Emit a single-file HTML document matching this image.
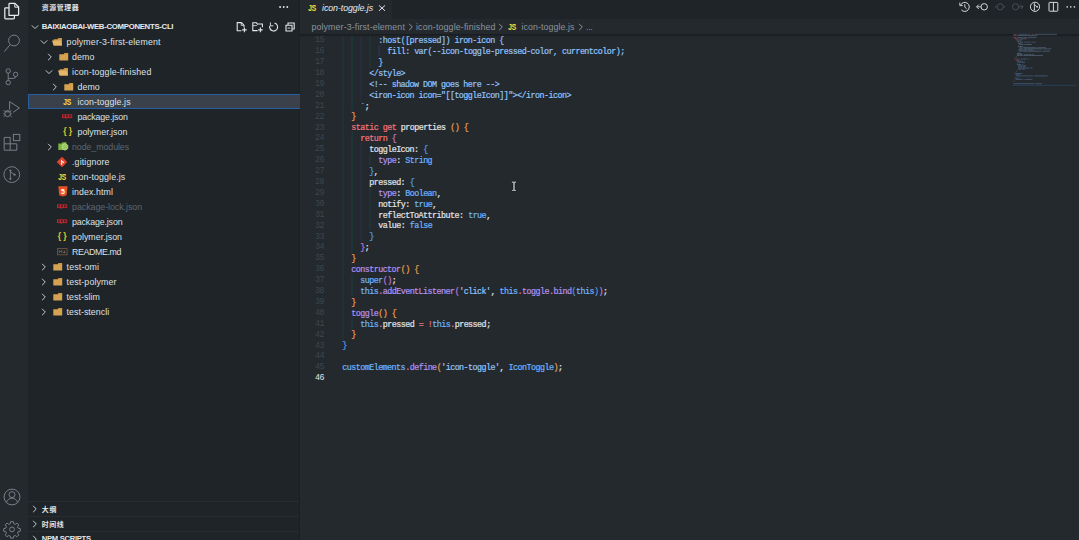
<!DOCTYPE html>
<html lang="zh-CN"><head><meta charset="utf-8"><title>icon-toggle.js</title><style>
html,body{margin:0;padding:0}
body{width:1079px;height:540px;overflow:hidden;position:relative;background:#24292e;font-family:"Liberation Sans","Noto Sans CJK SC",sans-serif;-webkit-font-smoothing:antialiased}
.abar{position:absolute;left:0;top:0;width:28px;height:540px;background:#24292e}
.side{position:absolute;left:28px;top:0;width:272px;height:540px;background:#1f2428}
.sideborder{position:absolute;left:298.8px;top:0;width:1.2px;height:540px;background:#1c2024}
.sel{position:absolute;left:28px;width:272px;height:15.3px;background:#3a414b;box-sizing:border-box;border:1px solid #255ea3;border-right:0;border-bottom-width:1.3px}
.t{position:absolute;white-space:nowrap;line-height:14px;height:14px}
.i{position:absolute;overflow:visible}
.paneline{position:absolute;left:28px;width:271px;height:1px;background:#272c31}
.tabbar{position:absolute;left:300px;top:0;width:779px;height:18.5px;background:#1f2428}
.tab{position:absolute;left:300px;top:0;width:91.6px;height:18.5px;background:#24292e}
.shadow{position:absolute;left:300px;top:33.6px;width:779px;height:3.4px;background:linear-gradient(rgba(22,25,29,0.9),rgba(27,31,35,0));z-index:5}
.g{position:absolute;width:1.5px;margin-left:-0.25px}
.code{font-family:"Liberation Mono",monospace;font-size:8.40px;font-weight:normal;-webkit-text-stroke:0.2px;letter-spacing:-0.546px}
.c,.ln{position:absolute;white-space:pre;line-height:10.90px;height:10.90px}
.ln{left:300px;width:23.9px;text-align:right;font-weight:normal;-webkit-text-stroke:0}
</style></head><body>
<div class="abar"></div>
<div class="side"></div>
<div class="sideborder"></div>
<div class="sel" style="top:94px"></div>
<span class="t" style="left:41.80px;top:0.80px;font-size:6.90px;color:#e1e4e8;font-weight:bold;letter-spacing:0.589px">资源管理器</span>
<span class="t" style="left:41.80px;top:20.00px;font-size:7.80px;color:#e6e9ed;font-weight:bold;letter-spacing:-0.308px">BAIXIAOBAI-WEB-COMPONENTS-CLI</span>
<svg class="i" style="left:30.40px;top:23.20px" width="10" height="8" viewBox="0 0 10 8"><path d="M1.8 2.4 L5 5.6 L8.2 2.4" fill="none" stroke="#c5cad0" stroke-width="1"/></svg>
<svg class="i" style="left:39.00px;top:37.50px" width="10" height="8" viewBox="0 0 10 8"><path d="M1.8 2.4 L5 5.6 L8.2 2.4" fill="none" stroke="#c5cad0" stroke-width="1"/></svg>
<svg class="i" style="left:52.10px;top:36.70px" width="11" height="9" viewBox="0 0 11 9"><path d="M1.6 2.2 H5.4 L6.4 0.9 H9.4 Q10 0.9 10 1.5 V8 Q10 8.5 9.5 8.5 H1.6 Z" fill="#c99748"/><path d="M0 3.6 H8.6 L10 8.5 H1.6 Z" fill="#e3b56b"/></svg>
<span class="t" style="left:66.60px;top:35.20px;font-size:8.84px;color:#dde1e6;letter-spacing:0.141px">polymer-3-first-element</span>
<svg class="i" style="left:45.64px;top:51.50px" width="8" height="10" viewBox="0 0 8 10"><path d="M2.1 1.8 L5.3 5 L2.1 8.2" fill="none" stroke="#c5cad0" stroke-width="1"/></svg>
<svg class="i" style="left:58.54px;top:51.70px" width="10" height="9" viewBox="0 0 10 9"><path d="M0.3 2.2 H4.6 L5.6 0.9 H8.6 Q9.2 0.9 9.2 1.5 V8 Q9.2 8.5 8.7 8.5 H0.8 Q0.3 8.5 0.3 8 Z" fill="#d4a251"/><path d="M5.2 1.9 H9.2" stroke="#b98636" stroke-width="0.6"/></svg>
<span class="t" style="left:72.04px;top:50.20px;font-size:8.84px;color:#dde1e6;letter-spacing:0.077px">demo</span>
<svg class="i" style="left:44.44px;top:67.50px" width="10" height="8" viewBox="0 0 10 8"><path d="M1.8 2.4 L5 5.6 L8.2 2.4" fill="none" stroke="#c5cad0" stroke-width="1"/></svg>
<svg class="i" style="left:57.54px;top:66.70px" width="11" height="9" viewBox="0 0 11 9"><path d="M1.6 2.2 H5.4 L6.4 0.9 H9.4 Q10 0.9 10 1.5 V8 Q10 8.5 9.5 8.5 H1.6 Z" fill="#c99748"/><path d="M0 3.6 H8.6 L10 8.5 H1.6 Z" fill="#e3b56b"/></svg>
<span class="t" style="left:72.04px;top:65.20px;font-size:8.84px;color:#dde1e6;letter-spacing:0.142px">icon-toggle-finished</span>
<svg class="i" style="left:51.08px;top:81.50px" width="8" height="10" viewBox="0 0 8 10"><path d="M2.1 1.8 L5.3 5 L2.1 8.2" fill="none" stroke="#c5cad0" stroke-width="1"/></svg>
<svg class="i" style="left:63.98px;top:81.70px" width="10" height="9" viewBox="0 0 10 9"><path d="M0.3 2.2 H4.6 L5.6 0.9 H8.6 Q9.2 0.9 9.2 1.5 V8 Q9.2 8.5 8.7 8.5 H0.8 Q0.3 8.5 0.3 8 Z" fill="#d4a251"/><path d="M5.2 1.9 H9.2" stroke="#b98636" stroke-width="0.6"/></svg>
<span class="t" style="left:77.48px;top:80.20px;font-size:8.84px;color:#dde1e6;letter-spacing:0.077px">demo</span>
<svg class="i" style="left:63.08px;top:97.00px" width="9" height="9" viewBox="0 0 9 9"><text x="0.2" y="7.7" font-size="9.3" font-weight="bold" fill="#f4d93e" stroke="#f4d93e" stroke-width="0.12" textLength="8.1" lengthAdjust="spacingAndGlyphs" font-family="Liberation Sans, sans-serif">JS</text></svg>
<span class="t" style="left:77.48px;top:95.20px;font-size:8.84px;color:#dde1e6;letter-spacing:0.083px">icon-toggle.js</span>
<svg class="i" style="left:62.48px;top:113.50px" width="11" height="6" viewBox="0 0 11 6"><rect x="0" y="0.4" width="10.2" height="3.7" fill="#bd2a30"/><path d="M3.4 4.1 H5.2 L4.3 4.9 Z" fill="#bd2a30"/><rect x="1" y="1.3" width="1.9" height="1.9" fill="#3a1c20"/><rect x="4" y="1.3" width="1.9" height="1.9" fill="#3a1c20"/><rect x="7" y="1.3" width="2.3" height="1.9" fill="#3a1c20"/><rect x="1.7" y="2" width="0.6" height="1.2" fill="#bd2a30"/><rect x="4.7" y="2" width="0.6" height="0.6" fill="#bd2a30"/><rect x="7.9" y="2" width="0.5" height="1.2" fill="#bd2a30"/></svg>
<span class="t" style="left:77.48px;top:110.20px;font-size:8.84px;color:#dde1e6;letter-spacing:-0.136px">package.json</span>
<span class="t" style="left:63.18px;top:124.10px;font-size:8.6px;font-weight:bold;color:#dccb2c;letter-spacing:2.2px">{}</span>
<span class="t" style="left:77.48px;top:125.20px;font-size:8.84px;color:#dde1e6;letter-spacing:0.036px">polymer.json</span>
<svg class="i" style="left:45.64px;top:141.50px" width="8" height="10" viewBox="0 0 8 10"><path d="M2.1 1.8 L5.3 5 L2.1 8.2" fill="none" stroke="#c5cad0" stroke-width="1"/></svg>
<svg class="i" style="left:58.04px;top:141.10px" width="11" height="10" viewBox="0 0 11 10"><path d="M0.3 2.4 H3.6 L4.6 1.2 H8.4 V9 H0.3 Z" fill="#7cb342"/><path d="M7 2.6 L9.8 4.2 V7.6 L7 9.2 L4.2 7.6 V4.2 Z" fill="#8bc34a" stroke="#cfe8b0" stroke-width="0.7"/><circle cx="7" cy="6" r="1.3" fill="#7cb342" stroke="#cfe8b0" stroke-width="0.5"/></svg>
<span class="t" style="left:72.04px;top:140.20px;font-size:8.84px;color:#5d6670;letter-spacing:-0.077px">node_modules</span>
<svg class="i" style="left:57.44px;top:156.50px" width="10" height="10" viewBox="0 0 10 10"><path d="M5 -0.3 L10.2 5 L5 10.3 L-0.3 5 Z" fill="#e2432c"/><path d="M4 3 L6.2 5.2 M4.6 3.6 V7" stroke="#fff" stroke-width="0.9" fill="none"/><circle cx="6.3" cy="5.3" r="0.8" fill="#fff"/><circle cx="4.6" cy="7" r="0.8" fill="#fff"/></svg>
<span class="t" style="left:72.04px;top:155.20px;font-size:8.84px;color:#dde1e6;letter-spacing:0.127px">.gitignore</span>
<svg class="i" style="left:57.64px;top:172.00px" width="9" height="9" viewBox="0 0 9 9"><text x="0.2" y="7.7" font-size="9.3" font-weight="bold" fill="#f4d93e" stroke="#f4d93e" stroke-width="0.12" textLength="8.1" lengthAdjust="spacingAndGlyphs" font-family="Liberation Sans, sans-serif">JS</text></svg>
<span class="t" style="left:72.04px;top:170.20px;font-size:8.84px;color:#dde1e6;letter-spacing:0.083px">icon-toggle.js</span>
<svg class="i" style="left:57.84px;top:186.10px" width="10" height="11" viewBox="0 0 10 11"><path d="M0.3 0.2 H9.5 L8.6 9.3 L4.9 10.5 L1.2 9.3 Z" fill="#e8502a"/><text x="4.9" y="7.8" font-size="7" font-weight="bold" fill="#fff" text-anchor="middle" font-family="Liberation Sans, sans-serif">5</text></svg>
<span class="t" style="left:72.04px;top:185.20px;font-size:8.84px;color:#dde1e6;letter-spacing:0.075px">index.html</span>
<svg class="i" style="left:57.04px;top:203.50px" width="11" height="6" viewBox="0 0 11 6"><rect x="0" y="0.4" width="10.2" height="3.7" fill="#bd2a30"/><path d="M3.4 4.1 H5.2 L4.3 4.9 Z" fill="#bd2a30"/><rect x="1" y="1.3" width="1.9" height="1.9" fill="#3a1c20"/><rect x="4" y="1.3" width="1.9" height="1.9" fill="#3a1c20"/><rect x="7" y="1.3" width="2.3" height="1.9" fill="#3a1c20"/><rect x="1.7" y="2" width="0.6" height="1.2" fill="#bd2a30"/><rect x="4.7" y="2" width="0.6" height="0.6" fill="#bd2a30"/><rect x="7.9" y="2" width="0.5" height="1.2" fill="#bd2a30"/></svg>
<span class="t" style="left:72.04px;top:200.20px;font-size:8.84px;color:#5d6670;letter-spacing:-0.040px">package-lock.json</span>
<svg class="i" style="left:57.04px;top:218.50px" width="11" height="6" viewBox="0 0 11 6"><rect x="0" y="0.4" width="10.2" height="3.7" fill="#bd2a30"/><path d="M3.4 4.1 H5.2 L4.3 4.9 Z" fill="#bd2a30"/><rect x="1" y="1.3" width="1.9" height="1.9" fill="#3a1c20"/><rect x="4" y="1.3" width="1.9" height="1.9" fill="#3a1c20"/><rect x="7" y="1.3" width="2.3" height="1.9" fill="#3a1c20"/><rect x="1.7" y="2" width="0.6" height="1.2" fill="#bd2a30"/><rect x="4.7" y="2" width="0.6" height="0.6" fill="#bd2a30"/><rect x="7.9" y="2" width="0.5" height="1.2" fill="#bd2a30"/></svg>
<span class="t" style="left:72.04px;top:215.20px;font-size:8.84px;color:#dde1e6;letter-spacing:-0.136px">package.json</span>
<span class="t" style="left:57.74px;top:229.10px;font-size:8.6px;font-weight:bold;color:#dccb2c;letter-spacing:2.2px">{}</span>
<span class="t" style="left:72.04px;top:230.20px;font-size:8.84px;color:#dde1e6;letter-spacing:0.036px">polymer.json</span>
<svg class="i" style="left:56.94px;top:247.60px" width="11" height="8" viewBox="0 0 11 8"><rect x="0.5" y="0.6" width="9.6" height="6.2" fill="none" stroke="#765a45" stroke-width="0.8"/><path d="M2.2 5.2 V2.4 L3.5 3.9 L4.8 2.4 V5.2 M7.4 2.4 V5 M6.2 3.9 L7.4 5.2 L8.6 3.9" fill="none" stroke="#8d735f" stroke-width="0.7"/></svg>
<span class="t" style="left:72.04px;top:245.20px;font-size:8.84px;color:#dde1e6;letter-spacing:-0.389px">README.md</span>
<svg class="i" style="left:40.20px;top:261.50px" width="8" height="10" viewBox="0 0 8 10"><path d="M2.1 1.8 L5.3 5 L2.1 8.2" fill="none" stroke="#c5cad0" stroke-width="1"/></svg>
<svg class="i" style="left:53.10px;top:261.70px" width="10" height="9" viewBox="0 0 10 9"><path d="M0.3 2.2 H4.6 L5.6 0.9 H8.6 Q9.2 0.9 9.2 1.5 V8 Q9.2 8.5 8.7 8.5 H0.8 Q0.3 8.5 0.3 8 Z" fill="#d4a251"/><path d="M5.2 1.9 H9.2" stroke="#b98636" stroke-width="0.6"/></svg>
<span class="t" style="left:66.60px;top:260.20px;font-size:8.84px;color:#dde1e6;letter-spacing:0.149px">test-omi</span>
<svg class="i" style="left:40.20px;top:276.50px" width="8" height="10" viewBox="0 0 8 10"><path d="M2.1 1.8 L5.3 5 L2.1 8.2" fill="none" stroke="#c5cad0" stroke-width="1"/></svg>
<svg class="i" style="left:53.10px;top:276.70px" width="10" height="9" viewBox="0 0 10 9"><path d="M0.3 2.2 H4.6 L5.6 0.9 H8.6 Q9.2 0.9 9.2 1.5 V8 Q9.2 8.5 8.7 8.5 H0.8 Q0.3 8.5 0.3 8 Z" fill="#d4a251"/><path d="M5.2 1.9 H9.2" stroke="#b98636" stroke-width="0.6"/></svg>
<span class="t" style="left:66.60px;top:275.20px;font-size:8.84px;color:#dde1e6;letter-spacing:0.118px">test-polymer</span>
<svg class="i" style="left:40.20px;top:291.50px" width="8" height="10" viewBox="0 0 8 10"><path d="M2.1 1.8 L5.3 5 L2.1 8.2" fill="none" stroke="#c5cad0" stroke-width="1"/></svg>
<svg class="i" style="left:53.10px;top:291.70px" width="10" height="9" viewBox="0 0 10 9"><path d="M0.3 2.2 H4.6 L5.6 0.9 H8.6 Q9.2 0.9 9.2 1.5 V8 Q9.2 8.5 8.7 8.5 H0.8 Q0.3 8.5 0.3 8 Z" fill="#d4a251"/><path d="M5.2 1.9 H9.2" stroke="#b98636" stroke-width="0.6"/></svg>
<span class="t" style="left:66.60px;top:290.20px;font-size:8.84px;color:#dde1e6;letter-spacing:0.058px">test-slim</span>
<svg class="i" style="left:40.20px;top:306.50px" width="8" height="10" viewBox="0 0 8 10"><path d="M2.1 1.8 L5.3 5 L2.1 8.2" fill="none" stroke="#c5cad0" stroke-width="1"/></svg>
<svg class="i" style="left:53.10px;top:306.70px" width="10" height="9" viewBox="0 0 10 9"><path d="M0.3 2.2 H4.6 L5.6 0.9 H8.6 Q9.2 0.9 9.2 1.5 V8 Q9.2 8.5 8.7 8.5 H0.8 Q0.3 8.5 0.3 8 Z" fill="#d4a251"/><path d="M5.2 1.9 H9.2" stroke="#b98636" stroke-width="0.6"/></svg>
<span class="t" style="left:66.60px;top:305.20px;font-size:8.84px;color:#dde1e6;letter-spacing:0.033px">test-stencli</span>
<div class="paneline" style="top:500.8px"></div>
<svg class="i" style="left:31.30px;top:504.40px" width="8" height="10" viewBox="0 0 8 10"><path d="M2.1 1.8 L5.3 5 L2.1 8.2" fill="none" stroke="#c5cad0" stroke-width="1"/></svg>
<span class="t" style="left:41.80px;top:503.30px;font-size:6.90px;color:#e6e9ed;font-weight:bold;letter-spacing:0.709px">大纲</span>
<div class="paneline" style="top:515.8px"></div>
<svg class="i" style="left:31.30px;top:519.40px" width="8" height="10" viewBox="0 0 8 10"><path d="M2.1 1.8 L5.3 5 L2.1 8.2" fill="none" stroke="#c5cad0" stroke-width="1"/></svg>
<span class="t" style="left:41.80px;top:518.30px;font-size:6.90px;color:#e6e9ed;font-weight:bold;letter-spacing:0.643px">时间线</span>
<div class="paneline" style="top:530.8px"></div>
<svg class="i" style="left:31.30px;top:534.40px" width="8" height="10" viewBox="0 0 8 10"><path d="M2.1 1.8 L5.3 5 L2.1 8.2" fill="none" stroke="#c5cad0" stroke-width="1"/></svg>
<span class="t" style="left:41.80px;top:532.40px;font-size:7.60px;color:#e6e9ed;font-weight:bold;letter-spacing:-0.264px">NPM SCRIPTS</span>
<div class="tabbar"></div>
<div class="tab"></div>
<svg class="i" style="left:308.20px;top:2.50px" width="9" height="9" viewBox="0 0 9 9"><text x="0.2" y="7.7" font-size="9.3" font-weight="bold" fill="#f4d93e" stroke="#f4d93e" stroke-width="0.12" textLength="8.1" lengthAdjust="spacingAndGlyphs" font-family="Liberation Sans, sans-serif">JS</text></svg>
<span class="t" style="left:322.00px;top:1.10px;font-size:8.84px;color:#e6e9ed;font-style:italic;letter-spacing:-0.074px">icon-toggle.js</span>
<svg class="i" style="left:378.2px;top:3.6px" width="8" height="8" viewBox="0 0 8 8"><path d="M1 1.4 L7 6.8 M7 1.4 L1 6.8" stroke="#dfe2e6" stroke-width="1"/></svg>
<span class="t" style="left:311.40px;top:20.20px;font-size:8.84px;color:#8b939b;letter-spacing:0.123px">polymer-3-first-element</span>
<svg class="i" style="left:407.00px;top:22.00px" width="8" height="10" viewBox="0 0 8 10"><path d="M2.1 1.8 L5.3 5 L2.1 8.2" fill="none" stroke="#8b939b" stroke-width="1"/></svg>
<span class="t" style="left:416.00px;top:20.20px;font-size:8.84px;color:#8b939b;letter-spacing:0.152px">icon-toggle-finished</span>
<svg class="i" style="left:497.40px;top:22.00px" width="8" height="10" viewBox="0 0 8 10"><path d="M2.1 1.8 L5.3 5 L2.1 8.2" fill="none" stroke="#8b939b" stroke-width="1"/></svg>
<svg class="i" style="left:508.00px;top:21.90px" width="9" height="9" viewBox="0 0 9 9"><text x="0.2" y="7.7" font-size="9.3" font-weight="bold" fill="#f4d93e" stroke="#f4d93e" stroke-width="0.12" textLength="8.1" lengthAdjust="spacingAndGlyphs" font-family="Liberation Sans, sans-serif">JS</text></svg>
<span class="t" style="left:521.60px;top:20.20px;font-size:8.84px;color:#8b939b;letter-spacing:0.069px">icon-toggle.js</span>
<svg class="i" style="left:576.90px;top:22.00px" width="8" height="10" viewBox="0 0 8 10"><path d="M2.1 1.8 L5.3 5 L2.1 8.2" fill="none" stroke="#8b939b" stroke-width="1"/></svg>
<span class="t" style="left:586.00px;top:20.20px;font-size:8.84px;color:#8b939b;letter-spacing:-0.286px">...</span>
<div class="shadow"></div>
<svg class="i" style="left:300px;top:30px" width="120" height="400" viewBox="300 30 120 400">
<rect x="342.30" y="34.20" width="1.5" height="305.20" fill="#1f3638"/>
<rect x="351.29" y="34.20" width="1.5" height="76.30" fill="#1e3a3b"/>
<rect x="351.29" y="132.30" width="1.5" height="119.90" fill="#1e3a3b"/>
<rect x="351.29" y="274.00" width="1.5" height="21.80" fill="#1e3a3b"/>
<rect x="351.29" y="317.60" width="1.5" height="10.90" fill="#1e3a3b"/>
<rect x="360.28" y="34.20" width="1.5" height="65.40" fill="#2a2d46"/>
<rect x="360.28" y="143.20" width="1.5" height="98.10" fill="#2a2d46"/>
<rect x="369.27" y="34.20" width="1.5" height="32.70" fill="#1f3638"/>
<rect x="369.27" y="154.10" width="1.5" height="10.90" fill="#1f3638"/>
<rect x="369.27" y="186.80" width="1.5" height="43.60" fill="#1f3638"/>
<rect x="378.26" y="45.10" width="1.5" height="10.90" fill="#2a3552"/>
</svg>
<div class="code">
<span class="ln" style="top:35.30px;color:#3c474d">15</span>
<span class="c" style="left:378.26px;top:36.10px;color:#92c4f9">:host([pressed]) iron-icon {</span>
<span class="ln" style="top:46.20px;color:#3c474d">16</span>
<span class="c" style="left:387.25px;top:47.00px;color:#92c4f9">fill: var(--icon-toggle-pressed-color, currentcolor);</span>
<span class="ln" style="top:57.10px;color:#3c474d">17</span>
<span class="c" style="left:378.26px;top:57.90px;color:#92c4f9">}</span>
<span class="ln" style="top:68.00px;color:#3c474d">18</span>
<span class="c" style="left:369.27px;top:68.80px;color:#92c4f9">&lt;/style&gt;</span>
<span class="ln" style="top:78.90px;color:#3c474d">19</span>
<span class="c" style="left:369.27px;top:79.70px;color:#92c4f9">&lt;!-- shadow DOM goes here --&gt;</span>
<span class="ln" style="top:89.80px;color:#3c474d">20</span>
<span class="c" style="left:369.27px;top:90.60px;color:#92c4f9">&lt;iron-icon icon="[[toggleIcon]]"&gt;&lt;/iron-icon&gt;</span>
<span class="ln" style="top:100.70px;color:#3c474d">21</span>
<span class="c" style="left:360.28px;top:101.50px;color:#92c4f9">`</span>
<span class="c" style="left:364.78px;top:101.50px;color:#e1e4e8">;</span>
<span class="ln" style="top:111.60px;color:#3c474d">22</span>
<span class="c" style="left:351.29px;top:112.40px;color:#f0a04b">}</span>
<span class="ln" style="top:122.50px;color:#3c474d">23</span>
<span class="c" style="left:351.29px;top:123.30px;color:#f6737c">static</span>
<span class="c" style="left:382.75px;top:123.30px;color:#f6737c">get</span>
<span class="c" style="left:400.74px;top:123.30px;color:#e1e4e8">properties</span>
<span class="c" style="left:450.18px;top:123.30px;color:#f0a04b">()</span>
<span class="c" style="left:463.67px;top:123.30px;color:#f0a04b">{</span>
<span class="ln" style="top:133.40px;color:#3c474d">24</span>
<span class="c" style="left:360.28px;top:134.20px;color:#f6737c">return</span>
<span class="c" style="left:391.75px;top:134.20px;color:#c678dd">{</span>
<span class="ln" style="top:144.30px;color:#3c474d">25</span>
<span class="c" style="left:369.27px;top:145.10px;color:#e1e4e8">toggleIcon:</span>
<span class="c" style="left:423.21px;top:145.10px;color:#4f9fe6">{</span>
<span class="ln" style="top:155.20px;color:#3c474d">26</span>
<span class="c" style="left:378.26px;top:156.00px;color:#b392f0">type</span>
<span class="c" style="left:396.24px;top:156.00px;color:#e1e4e8">:</span>
<span class="c" style="left:405.23px;top:156.00px;color:#6fb3fc">String</span>
<span class="ln" style="top:166.10px;color:#3c474d">27</span>
<span class="c" style="left:369.27px;top:166.90px;color:#4f9fe6">}</span>
<span class="c" style="left:373.76px;top:166.90px;color:#e1e4e8">,</span>
<span class="ln" style="top:177.00px;color:#3c474d">28</span>
<span class="c" style="left:369.27px;top:177.80px;color:#e1e4e8">pressed:</span>
<span class="c" style="left:409.73px;top:177.80px;color:#4f9fe6">{</span>
<span class="ln" style="top:187.90px;color:#3c474d">29</span>
<span class="c" style="left:378.26px;top:188.70px;color:#b392f0">type</span>
<span class="c" style="left:396.24px;top:188.70px;color:#e1e4e8">:</span>
<span class="c" style="left:405.23px;top:188.70px;color:#6fb3fc">Boolean</span>
<span class="c" style="left:436.69px;top:188.70px;color:#e1e4e8">,</span>
<span class="ln" style="top:198.80px;color:#3c474d">30</span>
<span class="c" style="left:378.26px;top:199.60px;color:#e1e4e8">notify:</span>
<span class="c" style="left:414.22px;top:199.60px;color:#6fb3fc">true</span>
<span class="c" style="left:432.20px;top:199.60px;color:#e1e4e8">,</span>
<span class="ln" style="top:209.70px;color:#3c474d">31</span>
<span class="c" style="left:378.26px;top:210.50px;color:#e1e4e8">reflectToAttribute:</span>
<span class="c" style="left:468.16px;top:210.50px;color:#6fb3fc">true</span>
<span class="c" style="left:486.14px;top:210.50px;color:#e1e4e8">,</span>
<span class="ln" style="top:220.60px;color:#3c474d">32</span>
<span class="c" style="left:378.26px;top:221.40px;color:#e1e4e8">value:</span>
<span class="c" style="left:409.73px;top:221.40px;color:#6fb3fc">false</span>
<span class="ln" style="top:231.50px;color:#3c474d">33</span>
<span class="c" style="left:369.27px;top:232.30px;color:#4f9fe6">}</span>
<span class="ln" style="top:242.40px;color:#3c474d">34</span>
<span class="c" style="left:360.28px;top:243.20px;color:#c678dd">}</span>
<span class="c" style="left:364.78px;top:243.20px;color:#e1e4e8">;</span>
<span class="ln" style="top:253.30px;color:#3c474d">35</span>
<span class="c" style="left:351.29px;top:254.10px;color:#f0a04b">}</span>
<span class="ln" style="top:264.20px;color:#3c474d">36</span>
<span class="c" style="left:351.29px;top:265.00px;color:#b392f0">constructor</span>
<span class="c" style="left:400.74px;top:265.00px;color:#f0a04b">()</span>
<span class="c" style="left:414.22px;top:265.00px;color:#f0a04b">{</span>
<span class="ln" style="top:275.10px;color:#3c474d">37</span>
<span class="c" style="left:360.28px;top:275.90px;color:#6fb3fc">super</span>
<span class="c" style="left:382.75px;top:275.90px;color:#c678dd">()</span>
<span class="c" style="left:391.75px;top:275.90px;color:#e1e4e8">;</span>
<span class="ln" style="top:286.00px;color:#3c474d">38</span>
<span class="c" style="left:360.28px;top:286.80px;color:#6fb3fc">this</span>
<span class="c" style="left:378.26px;top:286.80px;color:#f6737c">.</span>
<span class="c" style="left:382.75px;top:286.80px;color:#b392f0">addEventListener</span>
<span class="c" style="left:454.68px;top:286.80px;color:#c678dd">(</span>
<span class="c" style="left:459.17px;top:286.80px;color:#92c4f9">'click'</span>
<span class="c" style="left:490.63px;top:286.80px;color:#e1e4e8">,</span>
<span class="c" style="left:499.62px;top:286.80px;color:#6fb3fc">this</span>
<span class="c" style="left:517.61px;top:286.80px;color:#f6737c">.</span>
<span class="c" style="left:522.10px;top:286.80px;color:#b392f0">toggle</span>
<span class="c" style="left:549.07px;top:286.80px;color:#f6737c">.</span>
<span class="c" style="left:553.57px;top:286.80px;color:#b392f0">bind</span>
<span class="c" style="left:571.55px;top:286.80px;color:#4f9fe6">(</span>
<span class="c" style="left:576.04px;top:286.80px;color:#6fb3fc">this</span>
<span class="c" style="left:594.02px;top:286.80px;color:#4f9fe6">)</span>
<span class="c" style="left:598.52px;top:286.80px;color:#c678dd">)</span>
<span class="c" style="left:603.01px;top:286.80px;color:#e1e4e8">;</span>
<span class="ln" style="top:296.90px;color:#3c474d">39</span>
<span class="c" style="left:351.29px;top:297.70px;color:#f0a04b">}</span>
<span class="ln" style="top:307.80px;color:#3c474d">40</span>
<span class="c" style="left:351.29px;top:308.60px;color:#b392f0">toggle</span>
<span class="c" style="left:378.26px;top:308.60px;color:#f0a04b">()</span>
<span class="c" style="left:391.75px;top:308.60px;color:#f0a04b">{</span>
<span class="ln" style="top:318.70px;color:#3c474d">41</span>
<span class="c" style="left:360.28px;top:319.50px;color:#6fb3fc">this</span>
<span class="c" style="left:378.26px;top:319.50px;color:#f6737c">.</span>
<span class="c" style="left:382.75px;top:319.50px;color:#e1e4e8">pressed</span>
<span class="c" style="left:418.72px;top:319.50px;color:#f6737c">=</span>
<span class="c" style="left:427.71px;top:319.50px;color:#f6737c">!</span>
<span class="c" style="left:432.20px;top:319.50px;color:#6fb3fc">this</span>
<span class="c" style="left:450.18px;top:319.50px;color:#f6737c">.</span>
<span class="c" style="left:454.68px;top:319.50px;color:#e1e4e8">pressed</span>
<span class="c" style="left:486.14px;top:319.50px;color:#e1e4e8">;</span>
<span class="ln" style="top:329.60px;color:#3c474d">42</span>
<span class="c" style="left:351.29px;top:330.40px;color:#f0a04b">}</span>
<span class="ln" style="top:340.50px;color:#3c474d">43</span>
<span class="c" style="left:342.30px;top:341.30px;color:#4f9fe6">}</span>
<span class="ln" style="top:351.40px;color:#3c474d">44</span>
<span class="ln" style="top:362.30px;color:#3c474d">45</span>
<span class="c" style="left:342.30px;top:363.10px;color:#6fb3fc">customElements</span>
<span class="c" style="left:405.23px;top:363.10px;color:#f6737c">.</span>
<span class="c" style="left:409.73px;top:363.10px;color:#b392f0">define</span>
<span class="c" style="left:436.69px;top:363.10px;color:#f0a04b">(</span>
<span class="c" style="left:441.19px;top:363.10px;color:#92c4f9">'icon-toggle'</span>
<span class="c" style="left:499.62px;top:363.10px;color:#e1e4e8">,</span>
<span class="c" style="left:508.62px;top:363.10px;color:#6fb3fc">IconToggle</span>
<span class="c" style="left:553.57px;top:363.10px;color:#f0a04b">)</span>
<span class="c" style="left:558.06px;top:363.10px;color:#e1e4e8">;</span>
<span class="ln" style="top:373.40px;color:#e1e4e8">46</span>
</div>
<svg class="i" style="left:1010px;top:30px;z-index:6" width="69" height="60" viewBox="1010 30 69 60">
<rect x="1013" y="84.83" width="63" height="0.9" fill="#2b3f5a"/>
<rect x="1013.40" y="33.90" width="3.26" height="0.75" fill="#c96a74" opacity="0.5"/>
<rect x="1017.50" y="33.90" width="0.50" height="0.75" fill="#6a93c9" opacity="0.5"/>
<rect x="1018.66" y="33.90" width="8.52" height="0.75" fill="#6a93c9" opacity="0.5"/>
<rect x="1028.03" y="33.90" width="2.09" height="0.75" fill="#6a93c9" opacity="0.5"/>
<rect x="1030.95" y="33.90" width="0.50" height="0.75" fill="#6a93c9" opacity="0.5"/>
<rect x="1032.12" y="33.90" width="2.09" height="0.75" fill="#c96a74" opacity="0.5"/>
<rect x="1035.05" y="33.90" width="21.98" height="0.75" fill="#7f9fc4" opacity="0.5"/>
<rect x="1013.40" y="35.02" width="3.26" height="0.75" fill="#c96a74" opacity="0.5"/>
<rect x="1017.50" y="35.02" width="19.64" height="0.75" fill="#7f9fc4" opacity="0.5"/>
<rect x="1013.40" y="37.27" width="2.67" height="0.75" fill="#c96a74" opacity="0.5"/>
<rect x="1016.91" y="37.27" width="5.60" height="0.75" fill="#6a93c9" opacity="0.5"/>
<rect x="1023.35" y="37.27" width="3.84" height="0.75" fill="#c96a74" opacity="0.5"/>
<rect x="1028.03" y="37.27" width="7.94" height="0.75" fill="#6a93c9" opacity="0.5"/>
<rect x="1036.80" y="37.27" width="0.50" height="0.75" fill="#6a93c9" opacity="0.5"/>
<rect x="1014.57" y="38.40" width="3.26" height="0.75" fill="#c96a74" opacity="0.5"/>
<rect x="1018.66" y="38.40" width="1.50" height="0.75" fill="#c96a74" opacity="0.5"/>
<rect x="1021.00" y="38.40" width="5.60" height="0.75" fill="#6a93c9" opacity="0.5"/>
<rect x="1027.44" y="38.40" width="0.50" height="0.75" fill="#6a93c9" opacity="0.5"/>
<rect x="1015.74" y="39.52" width="3.26" height="0.75" fill="#c96a74" opacity="0.5"/>
<rect x="1019.83" y="39.52" width="2.67" height="0.75" fill="#6a93c9" opacity="0.5"/>
<rect x="1016.91" y="40.65" width="3.84" height="0.75" fill="#7f9fc4" opacity="0.5"/>
<rect x="1018.08" y="41.77" width="0.92" height="0.75" fill="#7f9fc4" opacity="0.5"/>
<rect x="1019.83" y="41.77" width="3.26" height="0.75" fill="#7f9fc4" opacity="0.5"/>
<rect x="1023.93" y="41.77" width="1.50" height="0.75" fill="#7f9fc4" opacity="0.5"/>
<rect x="1026.27" y="41.77" width="3.26" height="0.75" fill="#7f9fc4" opacity="0.5"/>
<rect x="1030.37" y="41.77" width="0.92" height="0.75" fill="#7f9fc4" opacity="0.5"/>
<rect x="1032.12" y="41.77" width="2.09" height="0.75" fill="#7f9fc4" opacity="0.5"/>
<rect x="1035.05" y="41.77" width="0.92" height="0.75" fill="#7f9fc4" opacity="0.5"/>
<rect x="1018.08" y="42.90" width="2.67" height="0.75" fill="#7f9fc4" opacity="0.5"/>
<rect x="1021.59" y="42.90" width="0.50" height="0.75" fill="#7f9fc4" opacity="0.5"/>
<rect x="1019.25" y="44.02" width="4.43" height="0.75" fill="#7f9fc4" opacity="0.5"/>
<rect x="1024.51" y="44.02" width="7.35" height="0.75" fill="#7f9fc4" opacity="0.5"/>
<rect x="1018.08" y="45.15" width="0.50" height="0.75" fill="#7f9fc4" opacity="0.5"/>
<rect x="1018.08" y="46.27" width="5.01" height="0.75" fill="#7f9fc4" opacity="0.5"/>
<rect x="1023.93" y="46.27" width="0.50" height="0.75" fill="#7f9fc4" opacity="0.5"/>
<rect x="1019.25" y="47.40" width="2.67" height="0.75" fill="#7f9fc4" opacity="0.5"/>
<rect x="1022.76" y="47.40" width="13.79" height="0.75" fill="#7f9fc4" opacity="0.5"/>
<rect x="1037.38" y="47.40" width="8.52" height="0.75" fill="#7f9fc4" opacity="0.5"/>
<rect x="1019.25" y="48.52" width="3.84" height="0.75" fill="#7f9fc4" opacity="0.5"/>
<rect x="1023.93" y="48.52" width="18.47" height="0.75" fill="#7f9fc4" opacity="0.5"/>
<rect x="1043.23" y="48.52" width="7.94" height="0.75" fill="#7f9fc4" opacity="0.5"/>
<rect x="1018.08" y="49.65" width="9.11" height="0.75" fill="#7f9fc4" opacity="0.5"/>
<rect x="1028.03" y="49.65" width="5.01" height="0.75" fill="#7f9fc4" opacity="0.5"/>
<rect x="1033.88" y="49.65" width="0.50" height="0.75" fill="#7f9fc4" opacity="0.5"/>
<rect x="1019.25" y="50.77" width="2.67" height="0.75" fill="#7f9fc4" opacity="0.5"/>
<rect x="1022.76" y="50.77" width="18.47" height="0.75" fill="#7f9fc4" opacity="0.5"/>
<rect x="1042.07" y="50.77" width="7.94" height="0.75" fill="#7f9fc4" opacity="0.5"/>
<rect x="1018.08" y="51.90" width="0.50" height="0.75" fill="#7f9fc4" opacity="0.5"/>
<rect x="1016.91" y="53.02" width="4.43" height="0.75" fill="#7f9fc4" opacity="0.5"/>
<rect x="1016.91" y="54.15" width="2.09" height="0.75" fill="#7f9fc4" opacity="0.5"/>
<rect x="1019.83" y="54.15" width="3.26" height="0.75" fill="#7f9fc4" opacity="0.5"/>
<rect x="1023.93" y="54.15" width="1.50" height="0.75" fill="#7f9fc4" opacity="0.5"/>
<rect x="1026.27" y="54.15" width="2.09" height="0.75" fill="#7f9fc4" opacity="0.5"/>
<rect x="1029.19" y="54.15" width="2.09" height="0.75" fill="#7f9fc4" opacity="0.5"/>
<rect x="1032.12" y="54.15" width="1.50" height="0.75" fill="#7f9fc4" opacity="0.5"/>
<rect x="1016.91" y="55.27" width="5.60" height="0.75" fill="#7f9fc4" opacity="0.5"/>
<rect x="1023.35" y="55.27" width="19.64" height="0.75" fill="#7f9fc4" opacity="0.5"/>
<rect x="1015.74" y="56.40" width="0.92" height="0.75" fill="#7f9fc4" opacity="0.5"/>
<rect x="1014.57" y="57.52" width="0.50" height="0.75" fill="#a87a45" opacity="0.5"/>
<rect x="1014.57" y="58.65" width="3.26" height="0.75" fill="#c96a74" opacity="0.5"/>
<rect x="1018.66" y="58.65" width="1.50" height="0.75" fill="#c96a74" opacity="0.5"/>
<rect x="1021.00" y="58.65" width="5.60" height="0.75" fill="#6a93c9" opacity="0.5"/>
<rect x="1027.44" y="58.65" width="0.92" height="0.75" fill="#6a93c9" opacity="0.5"/>
<rect x="1029.19" y="58.65" width="0.50" height="0.75" fill="#6a93c9" opacity="0.5"/>
<rect x="1015.74" y="59.77" width="3.26" height="0.75" fill="#c96a74" opacity="0.5"/>
<rect x="1019.83" y="59.77" width="0.50" height="0.75" fill="#6a93c9" opacity="0.5"/>
<rect x="1016.91" y="60.90" width="6.18" height="0.75" fill="#6a93c9" opacity="0.5"/>
<rect x="1023.93" y="60.90" width="0.50" height="0.75" fill="#6a93c9" opacity="0.5"/>
<rect x="1018.08" y="62.02" width="2.67" height="0.75" fill="#6a93c9" opacity="0.5"/>
<rect x="1021.59" y="62.02" width="3.26" height="0.75" fill="#6a93c9" opacity="0.5"/>
<rect x="1016.91" y="63.15" width="0.92" height="0.75" fill="#6a93c9" opacity="0.5"/>
<rect x="1016.91" y="64.28" width="4.43" height="0.75" fill="#6a93c9" opacity="0.5"/>
<rect x="1022.17" y="64.28" width="0.50" height="0.75" fill="#6a93c9" opacity="0.5"/>
<rect x="1018.08" y="65.40" width="2.67" height="0.75" fill="#6a93c9" opacity="0.5"/>
<rect x="1021.59" y="65.40" width="4.43" height="0.75" fill="#6a93c9" opacity="0.5"/>
<rect x="1018.08" y="66.53" width="3.84" height="0.75" fill="#6a93c9" opacity="0.5"/>
<rect x="1022.76" y="66.53" width="2.67" height="0.75" fill="#6a93c9" opacity="0.5"/>
<rect x="1018.08" y="67.65" width="10.86" height="0.75" fill="#6a93c9" opacity="0.5"/>
<rect x="1029.78" y="67.65" width="2.67" height="0.75" fill="#6a93c9" opacity="0.5"/>
<rect x="1018.08" y="68.78" width="3.26" height="0.75" fill="#6a93c9" opacity="0.5"/>
<rect x="1022.17" y="68.78" width="2.67" height="0.75" fill="#6a93c9" opacity="0.5"/>
<rect x="1016.91" y="69.90" width="0.50" height="0.75" fill="#6a93c9" opacity="0.5"/>
<rect x="1015.74" y="71.03" width="0.92" height="0.75" fill="#6a93c9" opacity="0.5"/>
<rect x="1014.57" y="72.15" width="0.50" height="0.75" fill="#a87a45" opacity="0.5"/>
<rect x="1014.57" y="73.28" width="7.35" height="0.75" fill="#6a93c9" opacity="0.5"/>
<rect x="1022.76" y="73.28" width="0.50" height="0.75" fill="#6a93c9" opacity="0.5"/>
<rect x="1015.74" y="74.40" width="4.43" height="0.75" fill="#6a93c9" opacity="0.5"/>
<rect x="1015.74" y="75.53" width="17.30" height="0.75" fill="#6a93c9" opacity="0.5"/>
<rect x="1033.88" y="75.53" width="13.79" height="0.75" fill="#6a93c9" opacity="0.5"/>
<rect x="1014.57" y="76.65" width="0.50" height="0.75" fill="#a87a45" opacity="0.5"/>
<rect x="1014.57" y="77.78" width="4.43" height="0.75" fill="#6a93c9" opacity="0.5"/>
<rect x="1019.83" y="77.78" width="0.50" height="0.75" fill="#6a93c9" opacity="0.5"/>
<rect x="1015.74" y="78.90" width="6.77" height="0.75" fill="#6a93c9" opacity="0.5"/>
<rect x="1023.35" y="78.90" width="0.50" height="0.75" fill="#6a93c9" opacity="0.5"/>
<rect x="1024.51" y="78.90" width="7.94" height="0.75" fill="#6a93c9" opacity="0.5"/>
<rect x="1014.57" y="80.03" width="0.50" height="0.75" fill="#a87a45" opacity="0.5"/>
<rect x="1013.40" y="81.15" width="0.50" height="0.75" fill="#6a93c9" opacity="0.5"/>
<rect x="1013.40" y="83.40" width="20.81" height="0.75" fill="#6a93c9" opacity="0.5"/>
<rect x="1035.05" y="83.40" width="6.77" height="0.75" fill="#6a93c9" opacity="0.5"/>
</svg>
<svg class="i" style="left:508px;top:178px" width="12" height="16" viewBox="508 178 12 16"><g stroke="#181b1f" stroke-width="0.9" fill="#181b1f"><rect x="511.8" y="181.6" width="4.3" height="1.2"/><rect x="513" y="182" width="2" height="8.6"/><rect x="511.8" y="189.9" width="4.3" height="1.1"/></g><rect x="513" y="182" width="2" height="8.6" fill="#8d9297"/><rect x="511.8" y="181.6" width="4.3" height="1.2" fill="#b9bdc2"/><rect x="511.8" y="189.9" width="4.3" height="1.1" fill="#a9adb2"/></svg>
<!-- activity bar icons -->
<svg class="i" style="left:0;top:0" width="28" height="200" viewBox="0 0 28 200" fill="none" stroke-linecap="butt">
  <!-- explorer (active) -->
  <g stroke="#e9ebee" stroke-width="1.25" stroke-linejoin="round">
    <path d="M9 15.4 V4.2 Q9 3.4 9.8 3.4 H15 L18.6 7 V14.6 Q18.6 15.4 17.8 15.4 Z"/>
    <path d="M14.8 3.6 V7.2 H18.4" stroke-width="1"/>
    <path d="M9 7.8 H5.6 Q4.8 7.8 4.8 8.6 V18 Q4.8 18.8 5.6 18.8 H13.6 Q14.4 18.8 14.4 18 V15.6"/>
  </g>
  <!-- search -->
  <g stroke="#767f89" stroke-width="1">
    <circle cx="14" cy="40.5" r="5.4"/>
    <path d="M10.2 44.6 L4.4 51.6"/>
  </g>
  <!-- source control -->
  <g stroke="#767f89" stroke-width="1">
    <circle cx="8.2" cy="71" r="2.2"/>
    <circle cx="15.6" cy="74.4" r="2.2"/>
    <circle cx="8.2" cy="82.6" r="2.2"/>
    <path d="M8.2 73.2 V80.4 M15.6 76.6 Q15.6 78.4 13.4 78.4 H8.4"/>
  </g>
  <!-- run & debug -->
  <g stroke="#767f89" stroke-width="1">
    <path d="M9.6 109.6 V101.6 L19.4 108 L13 112.4"/>
    <ellipse cx="7.6" cy="113.6" rx="2.7" ry="3.1"/>
    <path d="M5 111.8 H10.2 M4.9 113.8 H3.4 M4.9 115.6 L3.6 116.8 M5.2 111.6 L3.8 110.4 M10.3 113.8 H11.8 M10.3 115.6 L11.6 116.8 M10 111.6 L11.4 110.4"/>
  </g>
  <!-- extensions -->
  <g stroke="#767f89" stroke-width="1">
    <path d="M4.2 137.4 H10.2 V150.2 H4.2 Z M4.2 143.8 H16.8 V150.2 H10.2"/>
    <rect x="13.4" y="134.4" width="6.4" height="6.2"/>
  </g>
  <!-- gitlens -->
  <g stroke="#767f89" stroke-width="1">
    <circle cx="11.8" cy="174.6" r="7.9"/>
    <path d="M10.4 171 V178.4 M10.6 172 L14.2 174.4" stroke-width="0.9"/>
  </g>
  <g fill="#767f89" stroke="none">
    <circle cx="10.4" cy="170.6" r="1.1"/><circle cx="10.4" cy="178.8" r="1.1"/><circle cx="14.6" cy="174.7" r="1.1"/>
  </g>
</svg>
<svg class="i" style="left:0;top:485px" width="28" height="55" viewBox="0 485 28 55" fill="none">
  <!-- account -->
  <g stroke="#767f89" stroke-width="1">
    <circle cx="12" cy="497" r="7.9"/>
    <circle cx="12" cy="494.6" r="3"/>
    <path d="M6.4 502.4 Q8 498.2 12 498.2 Q16 498.2 17.6 502.4"/>
  </g>
  <!-- gear -->
  <g stroke="#767f89" stroke-width="1" stroke-linejoin="round">
    <circle cx="12" cy="529.4" r="2.4"/>
    <path d="M10.7 521.6 H13.3 L13.7 523.7 L15.2 524.3 L17 523.1 L18.8 524.9 L17.6 526.7 L18.2 528.2 L20.3 528.6 V531.2 L18.2 531.6 L17.6 533.1 L18.8 534.9 L17 536.7 L15.2 535.5 L13.7 536.1 L13.3 538.2 H10.7 L10.3 536.1 L8.8 535.5 L7 536.7 L5.2 534.9 L6.4 533.1 L5.8 531.6 L3.7 531.2 V528.6 L5.8 528.2 L6.4 526.7 L5.2 524.9 L7 523.1 L8.8 524.3 L10.3 523.7 Z"/>
  </g>
</svg>

<!-- sidebar header actions -->
<svg class="i" style="left:232px;top:18px" width="68" height="16" viewBox="232 18 68 16" fill="none" stroke="#e2e5e9" stroke-width="1.1">
  <!-- new file -->
  <path d="M241.4 30.8 H237.2 V22.6 H241.4 L244 25.2 V27.2"/>
  <path d="M241.2 22.8 V25.4 H243.8" stroke-width="0.8"/>
  <path d="M244.4 27.6 V32.2 M242.1 29.9 H246.7" stroke-width="1.1"/>
  <!-- new folder -->
  <path d="M257.6 30.6 H252.8 V22.8 H256.4 L257.4 24 H262.4 V27.2"/>
  <path d="M252.8 25.6 H256.6 L257.6 24.4" stroke-width="0.8"/>
  <path d="M260.4 27.6 V32.2 M258.1 29.9 H262.7" stroke-width="1.1"/>
  <!-- refresh -->
  <path d="M274.6 23.1 A4 4 0 1 1 269.8 25.8" />
  <path d="M270.4 22.4 V25.8 H273.4" stroke-width="0.9"/>
  <!-- collapse all -->
  <path d="M286 25.2 H292 V31 H286 Z" />
  <path d="M288 25 V23 H294.2 V29 H292.2" />
  <path d="M287.6 28.1 H290.4" stroke-width="0.9"/>
</svg>
<!-- sidebar title more -->
<svg class="i" style="left:278px;top:3px" width="12" height="8" viewBox="0 0 12 8"><circle cx="2.1" cy="4.05" r="0.95" fill="#e2e5e9"/><circle cx="5.7" cy="4.05" r="0.95" fill="#e2e5e9"/><circle cx="9.3" cy="4.05" r="0.95" fill="#e2e5e9"/></svg>

<!-- editor title actions -->
<svg class="i" style="left:955px;top:0" width="124" height="16" viewBox="955 0 124 16" fill="none">
  <g stroke="#d7dbe0" stroke-width="1">
    <!-- history -->
    <path d="M960.6 5.2 A4.5 4.5 0 1 1 961.4 9.9"/>
    <path d="M959.8 2.6 V5.6 H962.8" stroke-width="0.9"/>
    <path d="M964.8 4.2 V7.2 L966.6 8.6" stroke-width="0.9"/>
    <!-- prev revision -->
    <circle cx="984.2" cy="6.8" r="3.2"/>
    <path d="M981 6.8 H976.6 M978.8 4.6 L976.6 6.8 L978.8 9" stroke-width="0.9"/>
  </g>
  <g stroke="#485458" stroke-width="0.9">
    <!-- open revision (disabled) -->
    <circle cx="1000.2" cy="6.8" r="3.1"/>
    <path d="M994.8 6.8 H997 M1003.4 6.8 H1005.4"/>
    <!-- next revision (disabled) -->
    <circle cx="1015.6" cy="6.8" r="3.1"/>
    <path d="M1018.8 6.8 H1023 M1020.8 4.6 L1023 6.8 L1020.8 9"/>
  </g>
  <g stroke="#d7dbe0" stroke-width="1">
    <!-- gitlens -->
    <circle cx="1035" cy="6.8" r="4.6"/>
    <path d="M1034.4 4.2 V9.6 M1034.6 5 L1037 6.8" stroke-width="0.9"/>
    <!-- split editor -->
    <rect x="1049" y="2.4" width="8.8" height="8.8" rx="0.6"/>
    <path d="M1053.4 2.4 V11.2"/>
  </g>
  <g fill="#d7dbe0">
    <circle cx="1034.4" cy="4" r="0.8"/><circle cx="1034.4" cy="9.7" r="0.8"/><circle cx="1037.2" cy="6.9" r="0.8"/>
    <circle cx="1067.2" cy="6.9" r="0.8"/><circle cx="1070.8" cy="6.9" r="0.8"/><circle cx="1074.4" cy="6.9" r="0.8"/>
  </g>
</svg>

</body></html>
